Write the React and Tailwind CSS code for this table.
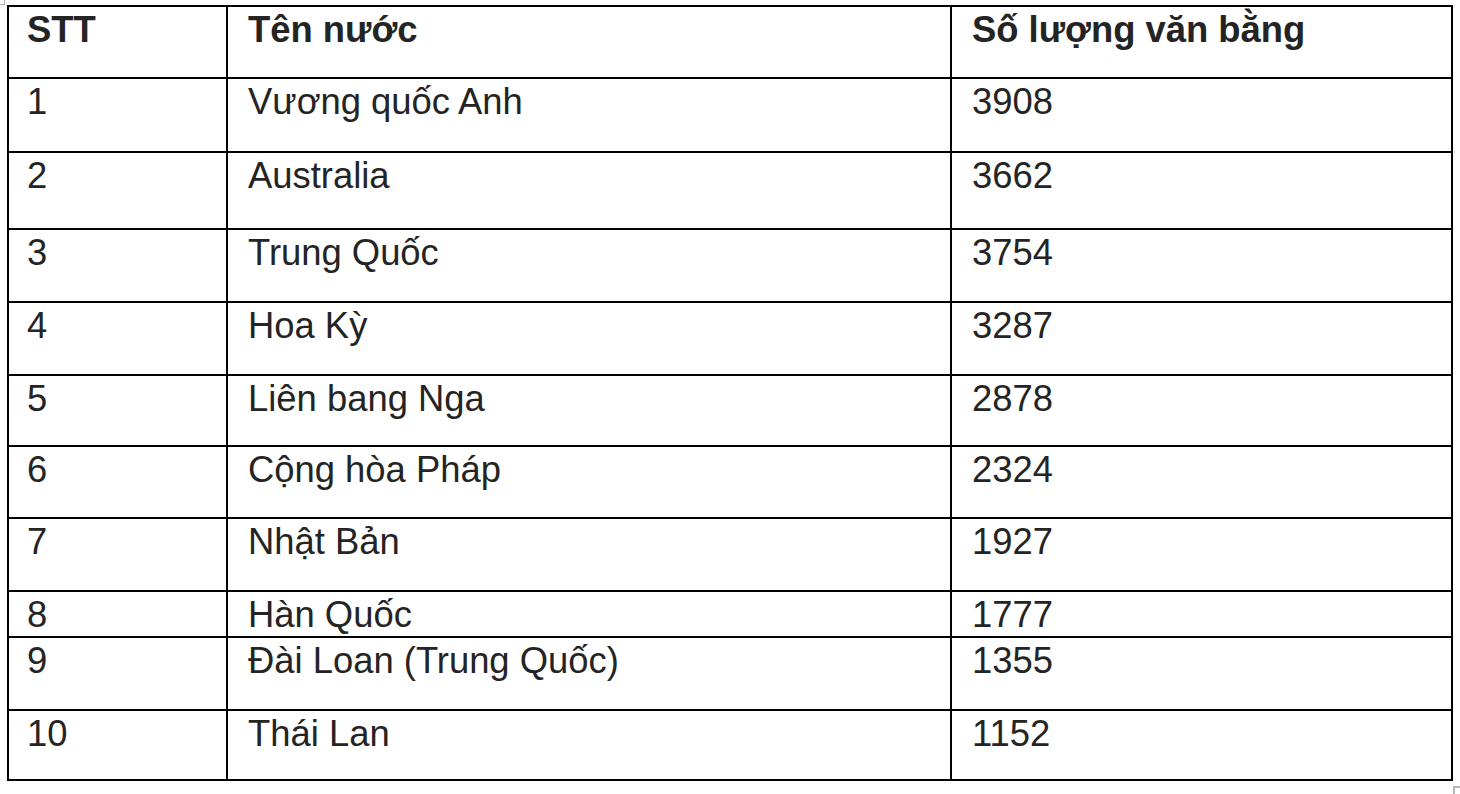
import React from "react";

const rows = [
  ["1", "Vương quốc Anh", "3908", "h-[74px]"],
  ["2", "Australia", "3662", "h-[77px]"],
  ["3", "Trung Quốc", "3754", "h-[73px]"],
  ["4", "Hoa Kỳ", "3287", "h-[73px]"],
  ["5", "Liên bang Nga", "2878", "h-[71px]"],
  ["6", "Cộng hòa Pháp", "2324", "h-[72px]"],
  ["7", "Nhật Bản", "1927", "h-[73px]"],
  ["8", "Hàn Quốc", "1777", "h-[46px]"],
  ["9", "Đài Loan (Trung Quốc)", "1355", "h-[73px]"],
  ["10", "Thái Lan", "1152", "h-[70px]"],
];

function Row({ a, b, c, h, bold, first }) {
  const txt = bold ? "font-bold" : "font-normal";
  return (
    <div className={`flex ${h} ${first ? "" : "border-t-2 border-black"}`}>
      <div className={`w-[217px] shrink-0 pl-[18px] pt-[2px] ${txt}`}>{a}</div>
      <div className={`w-[724px] shrink-0 border-l-2 border-black pl-[20px] pt-[2px] ${txt}`}>{b}</div>
      <div className={`w-[501px] shrink-0 border-l-2 border-black pl-[20px] pt-[2px] ${txt}`}>{c}</div>
    </div>
  );
}

export default function App() {
  return (
    <div className="relative w-[1460px] h-[794px] overflow-hidden bg-white text-[#242424] text-[36.4px] leading-[41px] [font-family:'Liberation_Sans',Arial,sans-serif]">
      <div className="absolute left-0 top-0 w-[5px] h-[5px] border-r border-b border-[#b5b5b5]" />
      <div className="absolute left-[1453px] top-[786px] w-[8px] h-[8px] border-l-2 border-t-2 border-[#b5b5b5]" />
      <div className="ml-[7px] pt-[5px]">
        <div className="w-[1446px] border-2 border-black">
          <Row a="STT" b="Tên nước" c="Số lượng văn bằng" h="h-[70px]" bold first />
          {rows.map((r) => (
            <Row key={r[0]} a={r[0]} b={r[1]} c={r[2]} h={r[3]} />
          ))}
        </div>
      </div>
    </div>
  );
}
